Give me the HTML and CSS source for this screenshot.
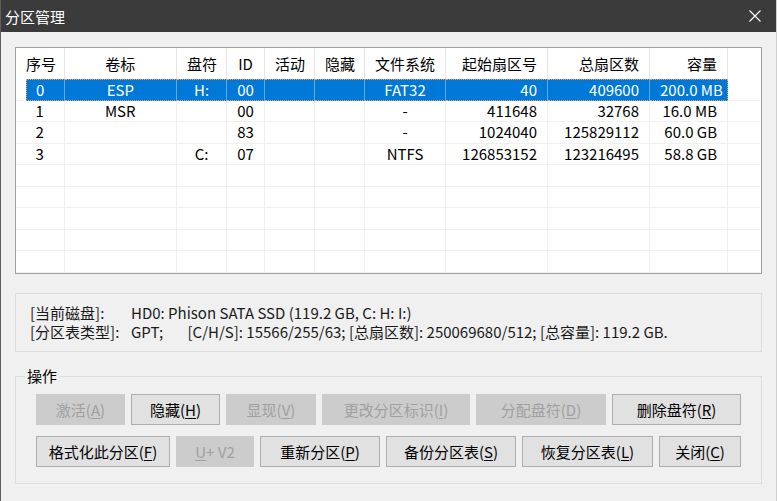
FILE: index.html
```html
<!DOCTYPE html>
<html lang="zh-CN">
<head>
    <meta charset="UTF-8">
    <title>分区管理</title>
    <link rel="stylesheet" href="styles.css">
</head>
<body>
    <div class="window">
        <div class="titlebar">
            <span class="title">分区管理</span>
            <svg class="close" width="12" height="12" viewBox="0 0 12 12">
                <path d="M0.5 0.5 L11.5 11.5 M11.5 0.5 L0.5 11.5" stroke="#fff" stroke-width="1.1" fill="none"/>
            </svg>
        </div>

        <div class="content">
            <div class="list">
                <table>
                    <colgroup>
                        <col class="c-pad"><col class="c-idx"><col class="c-label"><col class="c-drive">
                        <col class="c-id"><col class="c-flag"><col class="c-flag"><col class="c-fs">
                        <col class="c-num"><col class="c-num"><col class="c-size"><col class="c-fill">
                    </colgroup>
                    <thead>
                        <tr>
                            <th colspan="2">序号</th>
                            <th>卷标</th>
                            <th>盘符</th>
                            <th>ID</th>
                            <th>活动</th>
                            <th>隐藏</th>
                            <th>文件系统</th>
                            <th class="r">起始扇区号</th>
                            <th class="r">总扇区数</th>
                            <th class="r">容量</th>
                            <th class="fill"></th>
                        </tr>
                    </thead>
                    <tbody>
                        <tr class="sel">
                            <td class="pad"></td>
                            <td class="idx">0</td>
                            <td>ESP</td>
                            <td>H:</td>
                            <td>00</td>
                            <td></td>
                            <td></td>
                            <td>FAT32</td>
                            <td class="r">40</td>
                            <td class="r">409600</td>
                            <td class="r last">200.0 MB</td>
                            <td class="fill"></td>
                        </tr>
                        <tr>
                            <td class="pad"></td>
                            <td class="idx">1</td>
                            <td>MSR</td>
                            <td></td>
                            <td>00</td>
                            <td></td>
                            <td></td>
                            <td>-</td>
                            <td class="r">411648</td>
                            <td class="r">32768</td>
                            <td class="r">16.0 MB</td>
                            <td class="fill"></td>
                        </tr>
                        <tr>
                            <td class="pad"></td>
                            <td class="idx">2</td>
                            <td></td>
                            <td></td>
                            <td>83</td>
                            <td></td>
                            <td></td>
                            <td>-</td>
                            <td class="r">1024040</td>
                            <td class="r">125829112</td>
                            <td class="r">60.0 GB</td>
                            <td class="fill"></td>
                        </tr>
                        <tr>
                            <td class="pad"></td>
                            <td class="idx">3</td>
                            <td></td>
                            <td>C:</td>
                            <td>07</td>
                            <td></td>
                            <td></td>
                            <td>NTFS</td>
                            <td class="r">126853152</td>
                            <td class="r">123216495</td>
                            <td class="r">58.8 GB</td>
                            <td class="fill"></td>
                        </tr>
                        <tr class="empty"><td class="pad"></td><td></td><td></td><td></td><td></td><td></td><td></td><td></td><td></td><td></td><td></td><td class="fill"></td></tr>
                        <tr class="empty"><td class="pad"></td><td></td><td></td><td></td><td></td><td></td><td></td><td></td><td></td><td></td><td></td><td class="fill"></td></tr>
                        <tr class="empty"><td class="pad"></td><td></td><td></td><td></td><td></td><td></td><td></td><td></td><td></td><td></td><td></td><td class="fill"></td></tr>
                        <tr class="empty"><td class="pad"></td><td></td><td></td><td></td><td></td><td></td><td></td><td></td><td></td><td></td><td></td><td class="fill"></td></tr>
                        <tr class="empty"><td class="pad"></td><td></td><td></td><td></td><td></td><td></td><td></td><td></td><td></td><td></td><td></td><td class="fill"></td></tr>
                    </tbody>
                </table>
            </div>

            <div class="info">
                <span>[当前磁盘]:</span>
                <span>HD0: Phison SATA SSD (119.2 GB, C: H: I:)</span>
                <span>[分区表类型]:</span>
                <span><span class="gpt">GPT;</span>[C/H/S]: 15566/255/63; [总扇区数]: 250069680/512; [总容量]: 119.2 GB.</span>
            </div>

            <fieldset class="ops">
                <legend>操作</legend>
                <div class="btn-row">
                    <button class="btn w89" disabled>激活(<u>A</u>)</button>
                    <button class="btn w89">隐藏(<u>H</u>)</button>
                    <button class="btn w90" disabled>显现(<u>V</u>)</button>
                    <button class="btn w148" disabled>更改分区标识(<u>I</u>)</button>
                    <button class="btn w130" disabled>分配盘符(<u>D</u>)</button>
                    <button class="btn w129">删除盘符(<u>R</u>)</button>
                </div>
                <div class="btn-row">
                    <button class="btn w134">格式化此分区(<u>F</u>)</button>
                    <button class="btn w78" disabled><u>U</u>+ V2</button>
                    <button class="btn w120">重新分区(<u>P</u>)</button>
                    <button class="btn w130">备份分区表(<u>S</u>)</button>
                    <button class="btn w131">恢复分区表(<u>L</u>)</button>
                    <button class="btn w82">关闭(<u>C</u>)</button>
                </div>
            </fieldset>
        </div>
    </div>
</body>
</html>
```

FILE: styles.css
```css
/* window chrome */
body {
    margin: 0;
    background: #f0f0f0;
    font-family: "Noto Sans CJK SC", "Noto Sans", sans-serif;
    font-size: 15px;
    color: #000;
    overflow: hidden;
}

.window {
    height: 501px;
    border-left: 1px solid #5e5e5e;
    border-right: 1px solid #cfcfcf;
    box-sizing: border-box;
}

.titlebar {
    height: 32px;
    background: #3b3b3b;
    color: #fff;
    display: flex;
    align-items: center;
    justify-content: space-between;
    padding: 0 15px 0 4px;
}

.title {
    font-size: 15px;
}

.content {
    padding: 15px 14px 0 14px;
}

/* partition list */
.list {
    height: 227px;
    border: 1px solid #a0a0a0;
    background: #fff;
    box-sizing: border-box;
    overflow: hidden;
}

.list table {
    width: 744px;
    table-layout: fixed;
    border-collapse: separate;
    border-spacing: 0;
}

.c-pad { width: 10px; }
.c-idx { width: 38.5px; }
.c-label { width: 112.5px; }
.c-drive { width: 50px; }
.c-id { width: 38px; }
.c-flag { width: 50px; }
.c-fs { width: 81px; }
.c-num { width: 102px; }
.c-size { width: 78px; }
.c-fill { width: 32px; }

.list th {
    height: 31px;
    padding: 0 10px;
    font-weight: normal;
    text-align: center;
    border-right: 1px solid #e5e5e5;
    white-space: nowrap;
}

.list tbody tr {
    height: 21.5px;
}

.list td {
    padding: 0 10px;
    line-height: 18px;
    text-align: center;
    white-space: nowrap;
    border-right: 1px solid #f0f0f0;
    border-bottom: 1px solid #f0f0f0;
}

.list .r {
    text-align: right;
}

.list th.fill,
.list td.fill,
.list td.pad {
    border-right: 0;
}

.list td.pad {
    padding: 0;
}

.list td.idx {
    padding: 0 10px 0 0;
}

.list tr.sel td {
    background: #0078d7;
    color: #fff;
    border-top: 1px dotted #f3a35b;
    border-bottom: 1px dotted #f3a35b;
    border-right-color: #5ea9e6;
}

.list tr.sel td.idx {
    border-left: 1px dotted #f3a35b;
}

.list tr.sel td.last {
    border-right: 1px dotted #f3a35b;
}

.list tr.sel td.pad,
.list tr.sel td.fill {
    background: #fff;
    border-top: 0;
    border-bottom: 1px solid #f0f0f0;
}

/* disk info */
.info {
    margin-top: 19px;
    height: 59px;
    box-sizing: border-box;
    border: 1px solid #dcdcdc;
    padding: 9px 14px 0 14px;
    display: grid;
    grid-template-columns: 101px auto;
    align-content: start;
    line-height: 19px;
    color: #1a1a1a;
}

.gpt {
    display: inline-block;
    width: 56.5px;
}

/* operation buttons */
.ops {
    margin: 14px 0 0 0;
    padding: 8px 0 16px 20px;
    border: 1px solid #dcdcdc;
    min-width: 0;
}

.ops legend {
    margin-left: -11px;
    padding: 0 2px;
    line-height: 20px;
}

.btn-row {
    display: flex;
    gap: 6px;
}

.btn-row + .btn-row {
    margin-top: 11px;
}

.btn {
    height: 31px;
    padding: 0;
    border: 1px solid #adadad;
    background: #e1e1e1;
    color: #000;
    font-family: inherit;
    font-size: 15px;
}

.btn u {
    text-underline-offset: 2px;
}

.btn:disabled {
    background: #cccccc;
    border-color: #cccccc;
    color: #a0a0a0;
}

.w78 { width: 78px; }
.w82 { width: 82px; }
.w89 { width: 89px; }
.w90 { width: 90px; }
.w120 { width: 120px; }
.w129 { width: 129px; }
.w130 { width: 130px; }
.w131 { width: 131px; }
.w134 { width: 134px; }
.w148 { width: 148px; }
```
